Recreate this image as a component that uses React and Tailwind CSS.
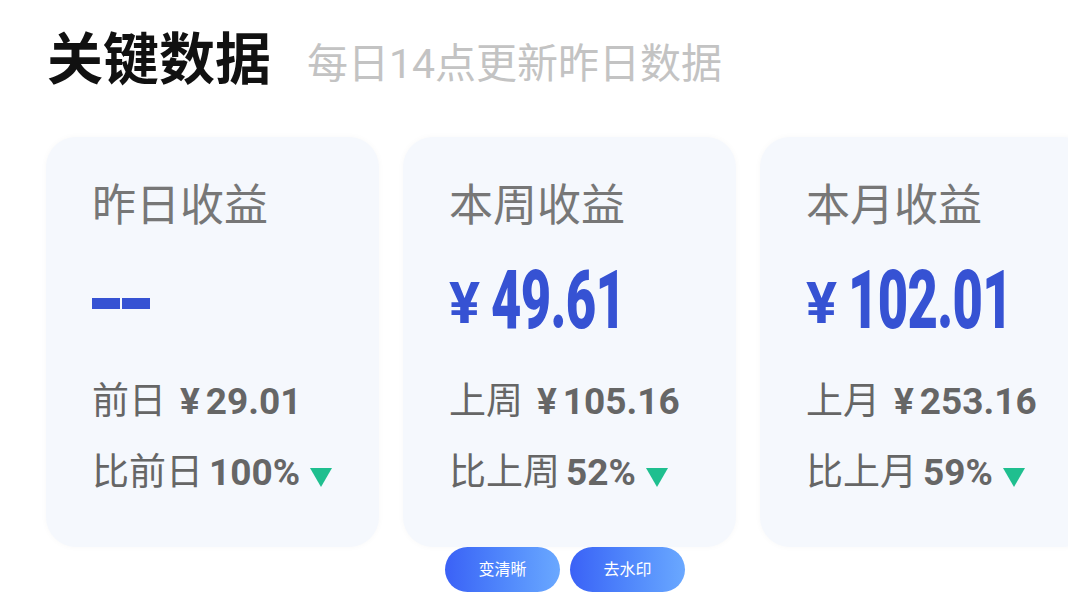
import React from 'react'

const font = { fontFamily: 'Roboto, "Noto Sans CJK SC", sans-serif' }

const cards = [
  { title: '昨日收益', amount: null, prevLabel: '前日', prev: '29.01', cmpLabel: '比前日', pct: '100%' },
  { title: '本周收益', amount: '49.61', prevLabel: '上周', prev: '105.16', cmpLabel: '比上周', pct: '52%' },
  { title: '本月收益', amount: '102.01', prevLabel: '上月', prev: '253.16', cmpLabel: '比上月', pct: '59%' },
]

function Card({ card }) {
  return (
    <div className="w-[333px] h-[410px] shrink-0 rounded-[30px] bg-[#f5f8fd] pl-[46px] pt-[47px] shadow-[0_0_6px_rgba(0,0,0,0.03)]">
      <div className="text-[44px] leading-none text-[#777]">{card.title}</div>
      <div className="h-[80px] mt-[34px] flex items-center text-[#3652d3]">
        {card.amount ? (
          <>
            <span className="text-[58px] font-bold leading-none mt-[2px]">¥</span>
            <span className="ml-[11px] inline-block origin-left scale-x-[0.64] text-[82px] font-black leading-none tracking-[-1px] mt-[-4px]">
              {card.amount}
            </span>
          </>
        ) : (
          <div className="flex gap-[2px] mt-[2px]">
            <div className="w-[28px] h-[11px] bg-[#3652d3]" />
            <div className="w-[28px] h-[11px] bg-[#3652d3]" />
          </div>
        )}
      </div>
      <div className="mt-[41px] flex items-center text-[37px] leading-none text-[#666] whitespace-nowrap">
        <span>{card.prevLabel}</span>
        <span className="ml-[14px] font-bold">¥</span>
        <span className="ml-[6px] font-bold">{card.prev}</span>
      </div>
      <div className="mt-[34px] flex items-center text-[37px] leading-none text-[#666] whitespace-nowrap">
        <span>{card.cmpLabel}</span>
        <span className="ml-[6px] font-bold">{card.pct}</span>
        <svg width="22" height="20" viewBox="0 0 22 20" className="ml-[10px] mt-[10px]">
          <polygon points="0,0 22,0 11,19" fill="#1fbf8f" />
        </svg>
      </div>
    </div>
  )
}

export default function App() {
  return (
    <div className="relative w-[1068px] h-[601px] overflow-hidden bg-white" style={font}>
      <div className="flex items-end pl-[47px] pt-[32px]">
        <h1 className="text-[56px] font-bold leading-none text-[#111]">关键数据</h1>
        <span className="ml-[36px] mb-[3px] text-[41px] leading-none text-[#c3c3c3]">每日14点更新昨日数据</span>
      </div>
      <div className="flex gap-[24px] pl-[46px] mt-[49px]">
        {cards.map((c) => (
          <Card key={c.title} card={c} />
        ))}
      </div>
      <div className="absolute left-[445px] top-[547px] flex gap-[10px]">
        <button className="w-[115px] h-[45px] rounded-full bg-gradient-to-r from-[#3b61f6] to-[#6aa8ff] text-white text-[16px]">变清晰</button>
        <button className="w-[115px] h-[45px] rounded-full bg-gradient-to-r from-[#3b61f6] to-[#6aa8ff] text-white text-[16px]">去水印</button>
      </div>
    </div>
  )
}
